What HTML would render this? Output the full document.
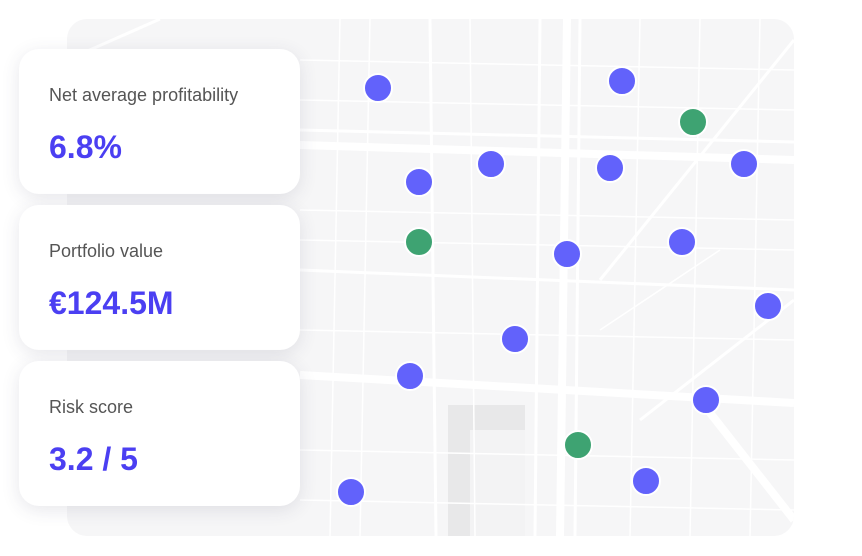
<!DOCTYPE html>
<html><head><meta charset="utf-8"><style>
body{margin:0;width:862px;height:556px;background:#fff;position:relative;overflow:hidden;font-family:"Liberation Sans",Arial,sans-serif}
.map{position:absolute;left:67px;top:19px;width:727px;height:517px;border-radius:20px;background:#f6f6f7;overflow:hidden}
.card{position:absolute;left:19px;width:281px;height:145px;background:#fff;border-radius:20px;box-shadow:0 4px 18px rgba(60,60,90,.12)}
.lab{position:absolute;left:30px;top:36px;font-size:18px;color:#555;font-weight:300}
.val{position:absolute;left:30px;top:80px;font-size:32px;color:#4b3ff2;font-weight:bold}
.m{position:absolute;width:26px;height:26px;border-radius:50%;border:2px solid #fff;margin:-15px 0 0 -15px;background:#6262fb}
.g{background:#3ea372}
</style></head><body>
<div class="map">
<svg width="727" height="517" style="position:absolute;left:0;top:0">
<g transform="translate(-67,-19)" stroke="#fff" fill="none">
<rect x="448" y="405" width="77" height="131" fill="#e8e8e9" stroke="none"/>
<rect x="470" y="430" width="55" height="106" fill="#f3f3f4" stroke="none"/>
<g stroke-width="8"><path d="M300 145 L794 160"/><path d="M300 375 L794 403"/><path d="M567 19 L560 536"/><path d="M700 400 L794 520"/></g>
<g stroke-width="3"><path d="M300 130 L794 142"/><path d="M580 19 L575 536"/><path d="M430 19 L436 536"/><path d="M540 19 L535 536"/><path d="M600 280 L794 40"/><path d="M640 420 L794 300"/><path d="M67 60 L160 19"/><path d="M300 270 L794 290"/></g>
<g stroke-width="1.5"><path d="M340 19 L330 536"/><path d="M370 19 L360 536"/><path d="M470 19 L475 536"/><path d="M640 19 L630 536"/><path d="M700 19 L690 536"/><path d="M760 19 L750 536"/><path d="M300 60 L794 70"/><path d="M300 100 L794 110"/><path d="M300 210 L794 220"/><path d="M300 240 L794 250"/><path d="M300 330 L794 340"/><path d="M300 450 L794 460"/><path d="M300 500 L794 510"/><path d="M600 330 L720 250"/></g>
</g></svg>
</div>
<div class="card" style="top:49px"><div class="lab">Net average profitability</div><div class="val">6.8%</div></div>
<div class="card" style="top:205px"><div class="lab">Portfolio value</div><div class="val">€124.5M</div></div>
<div class="card" style="top:361px"><div class="lab">Risk score</div><div class="val">3.2 / 5</div></div>
<div class="m" style="left:378px;top:88px"></div>
<div class="m" style="left:622px;top:81px"></div>
<div class="m g" style="left:693px;top:122px"></div>
<div class="m" style="left:491px;top:164px"></div>
<div class="m" style="left:610px;top:168px"></div>
<div class="m" style="left:744px;top:164px"></div>
<div class="m" style="left:419px;top:182px"></div>
<div class="m g" style="left:419px;top:242px"></div>
<div class="m" style="left:567px;top:254px"></div>
<div class="m" style="left:682px;top:242px"></div>
<div class="m" style="left:768px;top:306px"></div>
<div class="m" style="left:515px;top:339px"></div>
<div class="m" style="left:410px;top:376px"></div>
<div class="m" style="left:706px;top:400px"></div>
<div class="m g" style="left:578px;top:445px"></div>
<div class="m" style="left:646px;top:481px"></div>
<div class="m" style="left:351px;top:492px"></div>
</body></html>
